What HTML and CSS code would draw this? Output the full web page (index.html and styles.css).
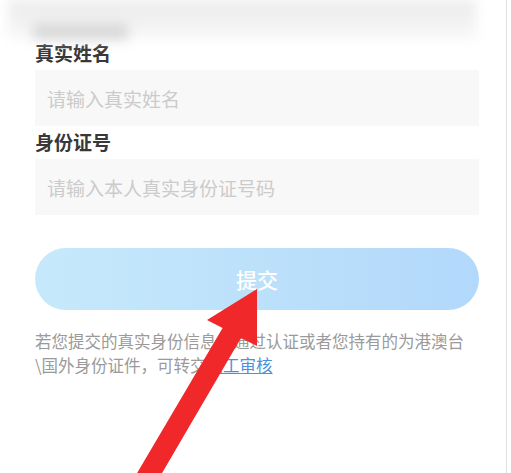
FILE: index.html
```html
<!DOCTYPE html>
<html lang="zh-CN">
<head>
    <meta charset="UTF-8">
    <meta name="viewport" content="width=device-width, initial-scale=1.0">
    <title>实名认证</title>
    <link rel="stylesheet" href="styles.css">
</head>
<body>
    <div class="page">
        <div class="top-blur">
            <div class="blur-blob"></div>
        </div>

        <form class="form">
            <label class="label" for="real-name">真实姓名</label>
            <input class="field" type="text" id="real-name" placeholder="请输入真实姓名">

            <label class="label" for="id-number">身份证号</label>
            <input class="field" type="text" id="id-number" placeholder="请输入本人真实身份证号码">

            <button class="submit" type="button">提交</button>

            <p class="notice">若您提交的真实身份信息未通过认证或者您持有的为港澳台\国外身份证件，可转交<a href="#" class="link">人工审核</a></p>
        </form>

        <!-- 标注箭头 -->
        <svg class="arrow" width="511" height="473" viewBox="0 0 511 473">
            <polygon points="257,289 257,346 241,338 158,480 133,480 222.6,328 207,320" fill="#f0282a"/>
        </svg>
    </div>
</body>
</html>
```

FILE: styles.css
```css
body {
    margin: 0;
    background: #fff;
    font-family: "Noto Sans CJK SC", "Noto Sans", sans-serif;
    overflow: hidden;
}
.page {
    position: relative;
    width: 507px;
    height: 473px;
    border-right: 1px solid #e2e2e2;
    box-sizing: border-box;
}
.top-blur {
    position: relative;
    height: 40px;
    margin: 0 30px 0 8px;
    background: linear-gradient(to bottom, #ebebeb, #f2f2f2 60%, #fafafa);
    filter: blur(6px);
}
.blur-blob {
    position: absolute;
    left: 25px;
    top: 24px;
    width: 95px;
    height: 16px;
    background: #d8d8d8;
}
.form {
    padding: 0 0 0 35px;
    width: 444px;
    display: flex;
    flex-direction: column;
}
.label {
    font-size: 19px;
    line-height: 26px;
    font-weight: bold;
    color: #383838;
}
.field {
    margin: 4px 0 3px;
    height: 56px;
    padding: 0 12px;
    border: none;
    background: #f8f8f8;
    font-family: inherit;
    font-size: 19px;
    color: #333;
    outline: none;
}
.field::placeholder {
    color: #cbcbcb;
}
.submit {
    margin-top: 30px;
    height: 62px;
    border: none;
    border-radius: 31px;
    background: linear-gradient(to right, #c6e9fa, #b2d8fb);
    color: #fff;
    font-family: inherit;
    font-size: 21px;
    font-weight: 500;
    cursor: pointer;
}
.notice {
    margin: 19px 0 0;
    max-width: 434px;
    font-size: 16.5px;
    line-height: 24px;
    color: #9a9a9a;
}
.link {
    color: #4a92db;
    text-decoration: underline;
}
.arrow {
    position: absolute;
    left: 0;
    top: 0;
    pointer-events: none;
}
```
